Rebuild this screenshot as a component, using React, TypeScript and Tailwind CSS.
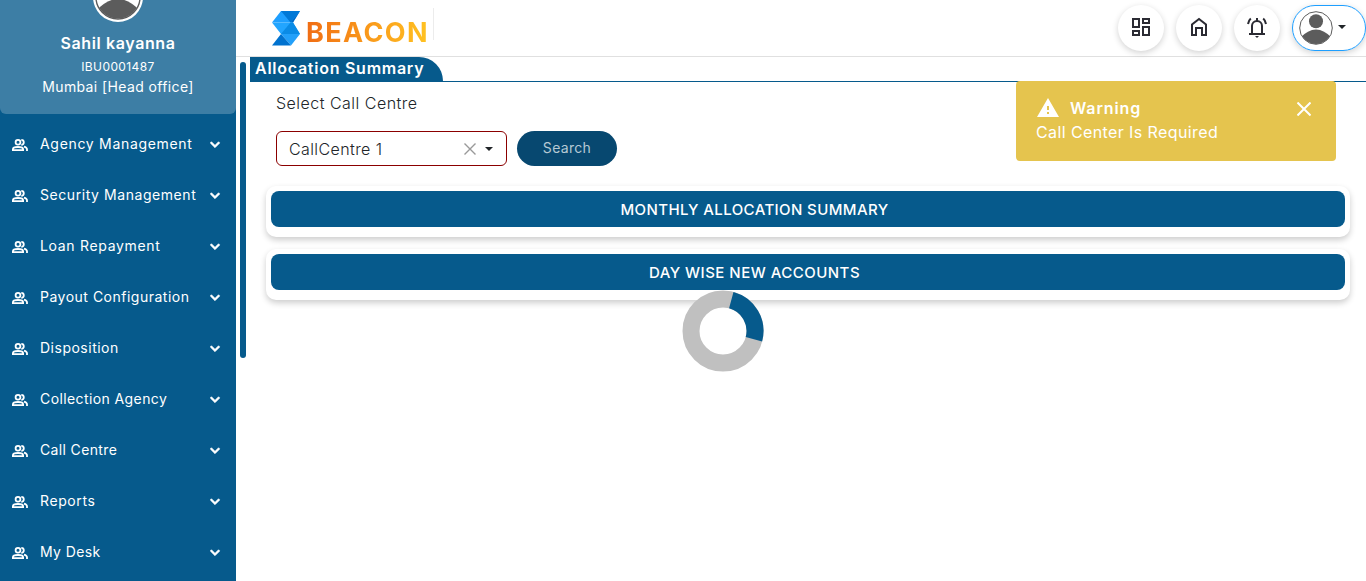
import { ReactNode } from "react";
import { MdOutlineDashboard, MdWarning } from "react-icons/md";
import { BiChevronDown } from "react-icons/bi";

const menu: { label: string; spacing: string }[] = [
  { label: "Agency Management", spacing: "tracking-[0.69px]" },
  { label: "Security Management", spacing: "tracking-[0.56px]" },
  { label: "Loan Repayment", spacing: "tracking-[0.68px]" },
  { label: "Payout Configuration", spacing: "tracking-[0.5px]" },
  { label: "Disposition", spacing: "tracking-[0.5px]" },
  { label: "Collection Agency", spacing: "tracking-[0.4px]" },
  { label: "Call Centre", spacing: "tracking-[0.36px]" },
  { label: "Reports", spacing: "tracking-[0.6px]" },
  { label: "My Desk", spacing: "tracking-[0.4px]" },
];

function PeopleIcon() {
  return (
    <svg viewBox="0 0 18 14" className="mt-0.5 h-[14px] w-[18px]" fill="none" stroke="white" strokeWidth="1.8">
      <circle cx="7" cy="4.300" r="2.400" />
      <path d="M1.900 12.100V11.300C1.900 9.800 4.500 9 7 9s5.100.8 5.100 2.300v.8Z" />
      <path d="M10.300 1.800a2.500 2.500 0 0 1 0 5M13 8.600c1.800.5 3 1.500 3 2.700V13" />
    </svg>
  );
}

function Avatar({ className }: { className: string }) {
  return (
    <svg viewBox="0 0 34 34" className={className}>
      <defs>
        <clipPath id="face"><circle cx="17" cy="17" r="16" /></clipPath>
      </defs>
      <circle cx="17" cy="17" r="16.3" fill="#fff" stroke="#5c5c5c" strokeWidth="1" />
      <g clipPath="url(#face)" fill="#5c5c5c">
        <circle cx="17" cy="10.3" r="7" />
        <path d="M1 27 Q9 18.5 17 18.5 Q25 18.5 33 27 V34 H1Z" />
      </g>
    </svg>
  );
}

function Logo() {
  return (
    <svg viewBox="0 0 29 35" className="h-[35px] w-[29px] shrink-0">
      <path d="M9 0H28L21 11.5H0Z" fill="#1e9fff" />
      <path d="M9 0H28L18.500 11.5Z" fill="#0078d7" />
      <path d="M28 0L21 11.5H18.500Z" fill="#0068c6" />
      <path d="M0 11.5H21L28 23H9Z" fill="#22a5ff" />
      <path d="M18.500 11.5H21L28 23H9Z" fill="#0a8be6" />
      <path d="M9 23H28L19 34.5Z" fill="#22a0fa" />
      <path d="M9 23L19 34.5H0Z" fill="#0072cf" />
    </svg>
  );
}

function RoundButton({ children }: { children: ReactNode }) {
  return (
    <button className="flex size-[46px] items-center justify-center rounded-full bg-white pb-0.5 text-[#2b2b33] shadow-[0_2px_6px_rgba(0,0,0,0.18)]">
      {children}
    </button>
  );
}

function Panel({ title, spacing }: { title: string; spacing: string }) {
  return (
    <section className="h-[51px] rounded-[10px] bg-white p-[5px] shadow-[0_3px_6px_rgba(0,0,0,0.2)]">
      <h2 className={`flex h-9 items-center justify-center rounded-[8px] bg-[#065a8c] pt-0.5 pr-[107px] text-[15px] font-medium text-white ${spacing}`}>
        <span>{title}</span>
      </h2>
    </section>
  );
}

export default function App() {
  return (
    <div className="relative flex h-[581px] w-[1366px] overflow-hidden bg-white font-['Inter',sans-serif] text-[#212529]">
      <aside className="h-full w-[236px] shrink-0 bg-[#065a8c] text-white">
        <div className="flex h-[114px] flex-col items-center overflow-hidden rounded-b-[6px] bg-[#3d7ea5]">
          <div className="-mt-[28px] flex size-[50px] shrink-0 items-center justify-center rounded-full bg-white">
            <Avatar className="size-[46px]" />
          </div>
          <p className="mt-[11px] text-[16px] leading-[20px] font-semibold tracking-[0.62px]"><span>Sahil kayanna</span></p>
          <p className="mt-[5px] text-[12px] leading-[18px] tracking-[0.4px]"><span>IBU0001487</span></p>
          <p className="mt-[1px] text-[14px] leading-[20px] tracking-[0.38px]"><span>Mumbai [Head office]</span></p>
        </div>
        <nav className="mt-[4px]">
          {menu.map((m) => (
            <a key={m.label} className="flex h-[51px] items-center pl-[11px]">
              <PeopleIcon />
              <span className={`ml-[11px] flex-1 text-[14px] whitespace-nowrap ${m.spacing}`}>{m.label}</span>
              <BiChevronDown className="mr-[11px] size-5 stroke-white stroke-[0.8]" />
            </a>
          ))}
        </nav>
      </aside>
      <div className="mt-[62px] ml-1 h-[296px] w-[6px] shrink-0 rounded-[3px] bg-[#065a8c]" />
      <main className="flex min-w-0 flex-1 flex-col">
        <header className="-ml-[10px] flex h-[57px] shrink-0 items-center border-b border-[#e0e0e0] pl-[36px]">
          <Logo />
          <span className="mt-[10px] ml-[5px] w-[122px] bg-gradient-to-r from-[#f06c14] to-[#ffc222] bg-clip-text text-[27px] leading-[28px] font-bold tracking-[1.4px] text-transparent">BEACON</span>
          <i className="-mt-2 ml-[5px] h-8 w-px bg-[#ececec]" />
          <div className="ml-auto flex items-center gap-3">
            <RoundButton><MdOutlineDashboard className="size-6" /></RoundButton>
            <RoundButton>
              <svg viewBox="0 0 24 24" className="size-6" fill="none" stroke="currentColor" strokeWidth="2"><path d="M5 20V9.5L12 4l7 5.500V20h-4v-7H9v7Z" /></svg>
            </RoundButton>
            <RoundButton>
              <svg viewBox="0 0 24 24" className="size-6" fill="none" stroke="currentColor" strokeWidth="2"><path d="M4 19h16M7 18v-7a5 5 0 0 1 10 0v7M12 3v3M5.800 3.500Q3.500 5.500 3 9M18.200 3.500q2.300 2 2.800 5.500" /><path d="M10 21h4l-2 2Z" fill="currentColor" stroke="none" /></svg>
            </RoundButton>
            <button className="flex h-[46px] w-[74px] items-center rounded-full border border-[#1e9fff] pl-[6px] shadow-[0_2px_6px_rgba(0,0,0,0.18)]">
              <Avatar className="size-[34px]" />
              <svg viewBox="0 0 8 4" className="mb-0.5 ml-[5px] h-1 w-2"><path d="M0 0h8L4 4Z" fill="#212529" /></svg>
            </button>
          </div>
        </header>
        <div className="ml-1 h-[25px] border-b border-[#065a8c]">
          <h1 className="h-[25px] w-[193px] rounded-tr-[24px] bg-[#065a8c] pl-[5px] text-[16px] leading-[23px] font-semibold tracking-[0.74px] whitespace-nowrap text-white"><span>Allocation Summary</span></h1>
        </div>
        <div className="pr-4 pl-5">
          <label className="mt-[9px] ml-[10px] block text-[16px] leading-[24px] font-light tracking-[0.48px]"><span>Select Call Centre</span></label>
          <div className="mt-[16px] ml-[10px] flex h-[35px] gap-[10px]">
            <div className="flex w-[231px] items-center rounded-[6px] border border-[#8b0000] pl-3">
              <span className="text-[16px] font-light tracking-[0.4px]">CallCentre 1</span>
              <svg viewBox="0 0 12 12" className="mr-[9px] ml-auto size-3"><path d="m.5.5 11 11m0-11-11 11" stroke="#999" strokeWidth="1.4" /></svg>
              <svg viewBox="0 0 8 4" className="mr-[13px] h-1 w-2"><path d="M0 0h8L4 4Z" fill="#212529" /></svg>
            </div>
            <button className="w-[100px] rounded-full bg-[#074870] pb-0.5 text-[14px] tracking-[0.3px] text-[#b5c8d4]"><span>Search</span></button>
          </div>
          <div className="mt-5 grid gap-3">
            <Panel title="MONTHLY ALLOCATION SUMMARY" spacing="tracking-[0.4px]" />
            <Panel title="DAY WISE NEW ACCOUNTS" spacing="tracking-[0.48px]" />
          </div>
        </div>
      </main>
      <div className="absolute top-[81px] left-[1016px] h-[80px] w-[320px] rounded-[4px] bg-[#e5c44e] px-5 pt-[15px] text-white">
        <div className="flex h-6 items-center">
          <MdWarning className="size-6" />
          <span className="ml-[10px] text-[16px] font-semibold tracking-[0.9px]">Warning</span>
          <svg viewBox="0 0 14 14" className="mt-0.5 mr-[5px] ml-auto size-[14px]"><path d="m.5.5 13 13M13.500.500.500 13.500" stroke="white" strokeWidth="2" /></svg>
        </div>
        <p className="text-[16px] leading-[24px] tracking-[0.4px]"><span>Call Center Is Required</span></p>
      </div>
      <svg viewBox="0 0 82 82" className="absolute top-[290px] left-[682px] size-[82px]" fill="none" strokeWidth="17">
        <circle cx="41" cy="41" r="32" stroke="#c0c0c0" />
        <circle cx="41" cy="41" r="32" stroke="#065a8c" pathLength="100" strokeDasharray="25 75" transform="rotate(-75 41 41)" />
      </svg>
    </div>
  );
}
